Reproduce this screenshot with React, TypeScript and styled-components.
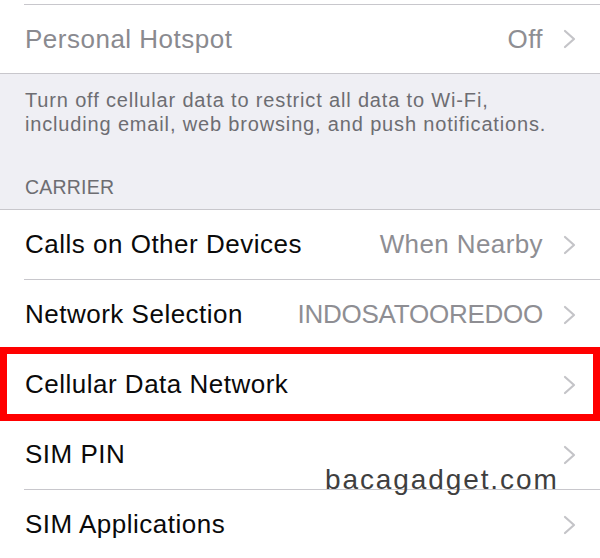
import React from "react";
import styled, { createGlobalStyle } from "styled-components";

const GlobalStyle = createGlobalStyle`
  html, body {
    margin: 0;
    padding: 0;
    background: #ffffff;
    font-family: "Liberation Sans", Arial, sans-serif;
    -webkit-font-smoothing: antialiased;
  }
`;

const Page = styled.div`
  width: 600px;
  height: 558px;
  overflow: hidden;
  display: flex;
  flex-direction: column;
  background: #efeff4;
`;

const Group = styled.div<{ $top?: boolean }>`
  background: #ffffff;
  display: flex;
  flex-direction: column;
  border-bottom: ${(p) => (p.$top ? "1px solid #c8c7cc" : "none")};
  border-top: ${(p) => (p.$top ? "none" : "1px solid #c8c7cc")};
`;

const Row = styled.div`
  position: relative;
  padding-left: 24px;
`;

const RowContent = styled.div<{ $height: number; $last?: boolean }>`
  height: ${(p) => p.$height}px;
  display: flex;
  align-items: center;
  padding-right: 24px;
  border-bottom: ${(p) => (p.$last ? "none" : "1px solid #c8c7cc")};
`;

const Title = styled.span<{ $disabled?: boolean }>`
  flex: 1;
  padding-left: 1px;
  font-size: 26px;
  letter-spacing: 0.5px;
  color: ${(p) => (p.$disabled ? "#8a8a8f" : "#0a0a0a")};
  white-space: nowrap;
`;

const Value = styled.span<{ $tracking?: number }>`
  font-size: 26px;
  letter-spacing: ${(p) => p.$tracking ?? 0.4}px;
  color: #8e8e93;
  margin-right: 20px;
  white-space: nowrap;
`;

const ChevronBox = styled.span`
  display: flex;
  width: 13px;
  height: 20px;
`;

const Footer = styled.div`
  padding: 14px 24px 12px 25px;
  display: flex;
  flex-direction: column;
`;

const FooterText = styled.p`
  margin: 0;
  font-size: 20px;
  line-height: 24px;
  letter-spacing: 0.84px;
  color: #6d6d72;
`;

const SectionHeader = styled.div`
  margin-top: 41px;
  font-size: 19.5px;
  line-height: 20px;
  letter-spacing: 0.2px;
  color: #6d6d72;
`;

const Highlight = styled.div`
  position: absolute;
  top: -3px;
  left: 0;
  right: 0;
  height: 74px;
  box-sizing: border-box;
  border: 7px solid #ff0000;
  pointer-events: none;
`;

const Watermark = styled.div`
  position: absolute;
  top: 46px;
  left: 325px;
  font-family: "Liberation Sans", Arial, sans-serif;
  font-size: 28px;
  line-height: 28px;
  letter-spacing: 1.9px;
  color: #3f3f3f;
  white-space: nowrap;
  z-index: 2;
`;

const Chevron = () => (
  <ChevronBox>
    <svg width="13" height="20" viewBox="0 0 13 20">
      <polyline
        points="2,2 11,10 2,18"
        fill="none"
        stroke="#c4c4c8"
        strokeWidth="2.2"
        strokeLinecap="round"
        strokeLinejoin="round"
      />
    </svg>
  </ChevronBox>
);

type Item = {
  title: string;
  value?: string;
  tracking?: number;
  highlight?: boolean;
  watermark?: boolean;
};

const carrierItems: Item[] = [
  { title: "Calls on Other Devices", value: "When Nearby" },
  { title: "Network Selection", value: "INDOSATOOREDOO", tracking: -0.25 },
  { title: "Cellular Data Network", highlight: true },
  { title: "SIM PIN", watermark: true },
  { title: "SIM Applications" },
];

export default function App() {
  return (
    <>
      <GlobalStyle />
      <Page>
        <Group $top>
          <Row>
            <RowContent $height={4} />
          </Row>
          <Row>
            <RowContent $height={68} $last>
              <Title $disabled>Personal Hotspot</Title>
              <Value>Off</Value>
              <Chevron />
            </RowContent>
          </Row>
        </Group>
        <Footer>
          <FooterText>
            Turn off cellular data to restrict all data to Wi-Fi,
            <br />
            including email, web browsing, and push notifications.
          </FooterText>
          <SectionHeader>CARRIER</SectionHeader>
        </Footer>
        <Group>
          {carrierItems.map((item, i) => (
            <Row key={item.title}>
              <RowContent $height={69} $last={i === carrierItems.length - 1}>
                <Title>{item.title}</Title>
                {item.value && <Value $tracking={item.tracking}>{item.value}</Value>}
                <Chevron />
              </RowContent>
              {item.highlight && <Highlight />}
              {item.watermark && <Watermark>bacagadget.com</Watermark>}
            </Row>
          ))}
        </Group>
      </Page>
    </>
  );
}
